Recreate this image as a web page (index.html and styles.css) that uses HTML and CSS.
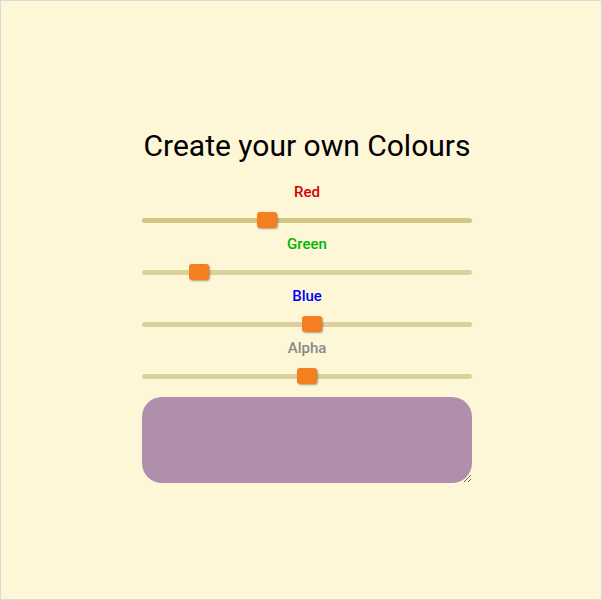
FILE: index.html
```html
<!DOCTYPE html>
<html lang="en">
<head>
<meta charset="utf-8">
<title>Create your own Colours</title>
<link rel="stylesheet" href="styles.css">
</head>
<body>
<div class="frame">
  <div class="panel">
    <h1 class="title">Create your own Colours</h1>
    <div class="row">
      <label class="label label-red" for="r">Red</label>
      <input class="slider slider-red" id="r" type="range" min="0" max="255" value="95">
    </div>
    <div class="row">
      <label class="label label-green" for="g">Green</label>
      <input class="slider" id="g" type="range" min="0" max="255" value="39">
    </div>
    <div class="row">
      <label class="label label-blue" for="b">Blue</label>
      <input class="slider" id="b" type="range" min="0" max="255" value="132">
    </div>
    <div class="row">
      <label class="label label-alpha" for="a">Alpha</label>
      <input class="slider" id="a" type="range" min="0" max="1" step="0.01" value="0.5">
    </div>
    <textarea class="preview"></textarea>
  </div>
</div>
</body>
</html>
```
FILE: styles.css
```css
html, body {
  margin: 0;
  padding: 0;
}
body {
  font-family: Roboto, "Liberation Sans", sans-serif;
  background: #fdf6d7;
}
.frame {
  box-sizing: border-box;
  width: 602px;
  height: 600px;
  border: 1px solid #d9d9d9;
  background: #fdf6d7;
  display: flex;
  justify-content: center;
  padding-left: 12px;
}
.panel {
  width: 330px;
  padding-top: 128px;
  display: flex;
  flex-direction: column;
}
.title {
  margin: 0 0 19px;
  font-size: 30px;
  font-weight: 400;
  line-height: 34px;
  text-align: center;
  color: #000;
}
.row {
  display: flex;
  flex-direction: column;
  margin-bottom: 6px;
}
.label {
  display: block;
  text-align: center;
  font-size: 15px;
  font-weight: 500;
  line-height: 20px;
  height: 20px;
  margin-bottom: 10px;
}
.label-red { color: #d40000; }
.label-green { color: #00b400; }
.label-blue { color: #0000ff; }
.label-alpha { color: #8a8a8a; }
.slider {
  -webkit-appearance: none;
  appearance: none;
  width: 330px;
  height: 16px;
  margin: 0;
  padding: 0;
  background: transparent;
}
.slider:focus { outline: none; }
.slider::-webkit-slider-runnable-track {
  height: 5px;
  border-radius: 3px;
  background: #dcd19c;
}
.slider-red::-webkit-slider-runnable-track {
  background: #d3c585;
}
.slider::-webkit-slider-thumb {
  -webkit-appearance: none;
  appearance: none;
  width: 20px;
  height: 16px;
  margin-top: -5.5px;
  border-radius: 3px;
  background: #f47f20;
  box-shadow: 1px 1px 2px rgba(0, 0, 0, 0.35);
  border: none;
}
.preview {
  box-sizing: border-box;
  display: block;
  width: 330px;
  height: 86px;
  margin: 7px 0 0;
  border: none;
  border-radius: 20px;
  background: #b08fac;
  padding: 0;
  font-family: inherit;
}
```
